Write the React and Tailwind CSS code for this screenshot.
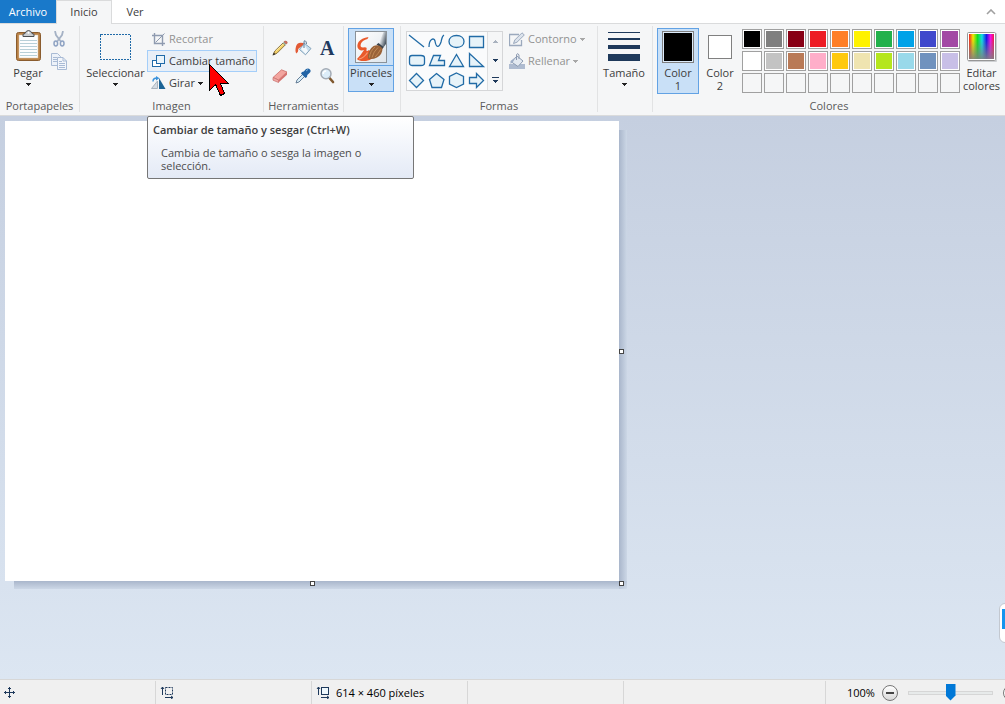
import { useState } from "react";

const palette = [
  { name: "Negro", fill: "bg-black" },
  { name: "Gris 50%", fill: "bg-[#7f7f7f]" },
  { name: "Rojo oscuro", fill: "bg-[#880015]" },
  { name: "Rojo", fill: "bg-[#ed1c24]" },
  { name: "Naranja", fill: "bg-[#ff7f27]" },
  { name: "Amarillo", fill: "bg-[#fff200]" },
  { name: "Verde", fill: "bg-[#22b14c]" },
  { name: "Turquesa", fill: "bg-[#00a2e8]" },
  { name: "Índigo", fill: "bg-[#3f48cc]" },
  { name: "Púrpura", fill: "bg-[#a349a4]" },
  { name: "Blanco", fill: "bg-white" },
  { name: "Gris 25%", fill: "bg-[#c3c3c3]" },
  { name: "Marrón", fill: "bg-[#b97a57]" },
  { name: "Rosa", fill: "bg-[#ffaec9]" },
  { name: "Oro", fill: "bg-[#ffc90e]" },
  { name: "Canela", fill: "bg-[#efe4b0]" },
  { name: "Lima", fill: "bg-[#b5e61d]" },
  { name: "Turquesa claro", fill: "bg-[#99d9ea]" },
  { name: "Gris azulado", fill: "bg-[#7092be]" },
  { name: "Lavanda", fill: "bg-[#c8bfe7]" },
];

const customSlots = [1, 2, 3, 4, 5, 6, 7, 8, 9, 10];

const shapes = [
  { name: "Línea", d: "M1 2L16 14" },
  { name: "Curva", d: "M1 14C1 6 6 4 7 8C8 15 11 15 13 9C14 5 14 3 16 2" },
  { name: "Óvalo", d: "M8.5 2.5C13 2.5 16 5 16 8.5S13 14.5 8.5 14.5S1 12 1 8.5S4 2.5 8.5 2.5Z" },
  { name: "Rectángulo", d: "M1.5 3.5H15.5V14.5H1.5Z" },
  { name: "Rectángulo redondeado", d: "M4 3.5H13Q16.5 3.5 16.5 6V11Q16.5 13.5 13 13.5H4Q1.5 13.5 1.5 11V6Q1.5 3.5 4 3.5Z" },
  { name: "Polígono", d: "M5.5 3.5H12.5L10.5 8.5H16.5V13.5H1.5Z" },
  { name: "Triángulo", d: "M8.5 2.5L15.5 14.5H1.5Z" },
  { name: "Triángulo rectángulo", d: "M1.5 1.5V14.5H15.5Z" },
  { name: "Rombo", d: "M8.5 1.5L15.5 8.5L8.5 15.5L1.5 8.5Z" },
  { name: "Pentágono", d: "M8.5 1.5L16 7.5L13.5 15.5H4L1.5 7.5Z" },
  { name: "Hexágono", d: "M8.5 1L15.5 4.5V12L8.5 15.5L1.5 12V4.5Z" },
  { name: "Flecha derecha", d: "M1.5 5.5H8.5V1.5L15.5 8.5L8.5 15.5V11.5H1.5Z" },
];

function Caret({ color = "text-[#222222]" }) {
  return (
    <svg className={color} width="5" height="3" viewBox="0 0 5 3" fill="currentColor" shapeRendering="crispEdges">
      <path d="M0 0H5V1H4V2H3V3H2V2H1V1H0Z" />
    </svg>
  );
}

function PasteIcon() {
  return (
    <svg width="26" height="32" viewBox="0 0 26 32">
      <rect x="1.5" y="2.5" width="24" height="28" rx="2" fill="#b98145" stroke="#8a5c2e" />
      <rect x="4" y="5" width="19" height="23" fill="#fcfdfe" stroke="#d9c7af" strokeWidth="0.5" />
      <path d="M5 10.5H22M5 13.5H22M5 16.5H22M5 19.5H22M5 22.5H22M5 25.5H22" stroke="#b7cfd8" />
      <path d="M8 6.5Q7 3.5 10 3.5Q11 0.5 13.5 0.5T17 3.5Q20 3.5 19 6.5Z" fill="#c9cccf" stroke="#4c4f52" />
      <circle cx="13.5" cy="2.8" r="1" fill="#fff" />
    </svg>
  );
}

function CutIcon() {
  return (
    <svg width="12" height="16" viewBox="0 0 12 16" fill="none">
      <path d="M2 0L3 4L7.5 10M10 0L9 4L4.5 10" stroke="#a5b2c5" strokeWidth="1.8" />
      <ellipse cx="2.8" cy="12.5" rx="1.8" ry="2.4" stroke="#8fa3c3" strokeWidth="1.5" />
      <ellipse cx="9.2" cy="12.5" rx="1.8" ry="2.4" stroke="#8fa3c3" strokeWidth="1.5" />
    </svg>
  );
}

function CopyIcon() {
  return (
    <svg width="16" height="17" viewBox="0 0 16 17" stroke="#a9bbd5">
      <path d="M0.5 0.5H6.5L9.5 3.5V12.5H0.5Z" fill="#edf2f9" />
      <path d="M2 4.5H6M2 6.5H6M2 8.5H6" />
      <path d="M6.5 4.5H12L15.5 8V16.5H6.5Z" fill="#f3f6fb" />
      <path d="M12 4.5V8H15.5" fill="none" />
      <path d="M8 8.5H11M8 10.5H14M8 12.5H14M8 14.5H14" />
    </svg>
  );
}

function CropIcon() {
  return (
    <svg width="13" height="13" viewBox="0 0 13 13" fill="none" stroke="#8f9bb0">
      <path d="M2.5 0V10.5H13M0 2.5H10.5V13" strokeWidth="1.4" />
      <path d="M3.5 9.5L12.5 0.5" />
    </svg>
  );
}

function ResizeIcon() {
  return (
    <svg width="13" height="13" viewBox="0 0 13 13" stroke="#1f6aa8">
      <rect x="0.5" y="5.5" width="8" height="6" fill="#fff" />
      <rect x="4.5" y="0.5" width="8" height="8" fill="#e9f4fb" />
    </svg>
  );
}

function RotateIcon() {
  return (
    <svg width="15" height="14" viewBox="0 0 15 14">
      <path d="M6.5 5V12.5H0.5Z" fill="#d4dbe2" stroke="#a9b3bd" />
      <path d="M8 2V13H14.5Z" fill="#1c6496" />
      <path d="M2 5.5Q2 2 6 2" fill="none" stroke="#3b93dc" strokeWidth="1.4" />
      <path d="M5 0L8.5 2.2L5 4.5Z" fill="#3b93dc" />
    </svg>
  );
}

function PencilIcon() {
  return (
    <svg width="16" height="16" viewBox="0 0 16 16">
      <path d="M1.2 14.8L2.8 11L11 3L13.2 5L5 13.2Z" fill="#f3d067" stroke="#826a39" strokeWidth="0.9" />
      <path d="M3.8 11L11.5 3.8" stroke="#fff2ae" strokeWidth="0.8" />
      <path d="M10.8 3L12 1.8L14.2 4L13 5.2Z" fill="#9bb3a0" />
      <path d="M12 1.8L13 1Q15.6 1 15.2 3.2L14.2 4Z" fill="#d97668" stroke="#a3503e" strokeWidth="0.6" />
      <path d="M0.5 15.5L1.8 12.4L3.6 14.2Z" fill="#39342c" />
    </svg>
  );
}

function FillIcon() {
  return (
    <svg width="17" height="16" viewBox="0 0 17 16">
      <path d="M9 3L16 8.5L10.5 14.8L4.5 9.5Z" fill="#c9dfee" stroke="#7b9cb5" strokeWidth="0.9" />
      <path d="M6 9L9.5 5L13 11L10.5 14Z" fill="#fff" opacity="0.8" />
      <path d="M9 8V2Q9 0.3 10.2 0.8T11.5 4" fill="none" stroke="#5f7d98" />
      <path d="M8.5 3Q2 1.5 1 6.5Q-0.2 11 1.2 13.5Q3.6 12.5 3.2 9L8 5Z" fill="#e25a35" />
    </svg>
  );
}

function EraserIcon() {
  return (
    <svg width="16" height="14" viewBox="0 0 16 14">
      <path d="M1 8.5L9.5 0.8L15 3L6.5 11Z" fill="#f3a59f" stroke="#c96f6b" strokeWidth="0.8" />
      <path d="M1 8.5L6.5 11V13.5L1 11.2Z" fill="#f0aaa6" stroke="#c96f6b" strokeWidth="0.7" />
      <path d="M6.5 11L15 3V5.8L6.5 13.5Z" fill="#d5716e" />
    </svg>
  );
}

function PickerIcon() {
  return (
    <svg width="16" height="16" viewBox="0 0 16 16">
      <path d="M1 15L2 12L8.5 5.5L10.5 7.5L4 14Z" fill="#d9eef8" stroke="#58728c" strokeWidth="0.9" />
      <path d="M7 4L8.8 3.5L11 1Q13.5 -0.2 15 1.5T14.5 5L12.3 7L12 9L10.5 10L6 5.5Z" fill="#2364a5" />
      <path d="M11 3L13 1.5" stroke="#84b4dc" />
    </svg>
  );
}

function MagnifierIcon() {
  return (
    <svg width="15" height="16" viewBox="0 0 15 16">
      <path d="M9.5 10L13 14" stroke="#80592f" strokeWidth="2.6" strokeLinecap="round" />
      <circle cx="6" cy="5.8" r="5" fill="#dcedf9" stroke="#a3abb5" strokeWidth="1.5" />
      <path d="M3.2 6Q3.2 3 6.2 3" fill="none" stroke="#fff" strokeWidth="1.4" />
    </svg>
  );
}

function BrushIcon() {
  return (
    <svg width="32" height="32" viewBox="0 0 32 32">
      <defs>
        <linearGradient id="brushPaper" x1="0" y1="0" x2="1" y2="1">
          <stop offset="0" stopColor="#ffffff" />
          <stop offset="1" stopColor="#dfe5eb" />
        </linearGradient>
        <linearGradient id="brushHandle" x1="0" y1="0" x2="1" y2="0.6">
          <stop offset="0" stopColor="#8a949e" />
          <stop offset="0.4" stopColor="#eef2f6" />
          <stop offset="1" stopColor="#4b5763" />
        </linearGradient>
      </defs>
      <rect x="0.5" y="0.5" width="31" height="31" fill="url(#brushPaper)" stroke="#8a9299" />
      <path d="M13.5 6Q6.5 7 3.5 11Q0.8 16 4 18.5Q6 20 9 19Q6 24 2 28Q4 30.5 11 30Q16 29 19 26L14 19Q11 21.5 11.5 18.5Q12.5 15.5 8 16.5Q4.5 16.5 6 12.5Q7.5 9 12.5 8Z" fill="#e9592b" />
      <path d="M4 28Q9 27 12.5 21.5" fill="none" stroke="#f59a72" strokeWidth="1.2" />
      <path d="M23 13L28.5 1H31V13L28 17Z" fill="url(#brushHandle)" />
      <path d="M21.5 13.5L23.5 12L28.5 16L27.5 18Z" fill="#39434d" />
      <path d="M13 27.5Q12.5 19 18.5 15Q24 12.5 27.5 17.5Q27.5 23.5 22 26.5Q17 29 13 27.5Z" fill="#9a6238" />
      <path d="M14.5 26.5Q15 20 20 16M17 26.5Q18.5 20.5 23 16.5M20 26Q23.5 22.5 25.5 18.5" stroke="#c58d59" fill="none" strokeWidth="0.9" />
    </svg>
  );
}

function OutlineIcon() {
  return (
    <svg width="16" height="15" viewBox="0 0 16 15" fill="none" stroke="#9ba9bd">
      <path d="M10 2.5H0.5V13.5H12.5V8" strokeWidth="1.3" />
      <path d="M4.5 11.5L5.8 8L13 0.8L15.3 3L8 10.2Z" fill="#dce3ec" />
    </svg>
  );
}

function ShapeFillIcon() {
  return (
    <svg width="16" height="16" viewBox="0 0 16 16">
      <path d="M0 11H16V16H0Z" fill="#aebbd0" />
      <path d="M8 3L14 8L9 13.5L2.5 9Z" fill="#e3e9f1" stroke="#8c9bb2" />
      <path d="M7.5 7V1.5Q9 -0.5 10 2V6" fill="none" stroke="#8c9bb2" />
      <path d="M6 4.5L1.5 8V11L4 9Z" fill="#9eaec7" />
    </svg>
  );
}

function SpectrumIcon() {
  return (
    <svg width="30" height="30" viewBox="0 0 30 30">
      <defs>
        <linearGradient id="hues">
          <stop offset="0" stopColor="#f02020" />
          <stop offset="0.16" stopColor="#f5e800" />
          <stop offset="0.34" stopColor="#10df20" />
          <stop offset="0.52" stopColor="#10dce8" />
          <stop offset="0.7" stopColor="#1818e8" />
          <stop offset="0.86" stopColor="#f010e8" />
          <stop offset="1" stopColor="#f01848" />
        </linearGradient>
        <linearGradient id="fade" x1="0" y1="0" x2="0" y2="1">
          <stop offset="0.2" stopColor="#808080" stopOpacity="0" />
          <stop offset="1" stopColor="#808080" stopOpacity="0.9" />
        </linearGradient>
      </defs>
      <rect x="1" y="1" width="29" height="29" rx="1" fill="#cdcfd2" />
      <rect x="0.5" y="0.5" width="28" height="28" rx="1" fill="#fff" stroke="#969696" />
      <rect x="2" y="2" width="25" height="25" fill="url(#hues)" />
      <rect x="2" y="2" width="25" height="25" fill="url(#fade)" />
    </svg>
  );
}

function Group({ label, className, children }) {
  return (
    <section className={`flex h-[86px] shrink-0 flex-col border-r border-[#e2e3e4] ${className}`}>
      <div className="flex flex-1 items-start">{children}</div>
      {label && <h2 className="h-3 text-center leading-3 text-[#5a5a5a]">{label}</h2>}
    </section>
  );
}

function StatusCell({ children }) {
  return <div className="flex w-[156px] shrink-0 items-center gap-1 border-r border-[#d7d7d7] pl-1">{children}</div>;
}

export default function App() {
  const [zoom, setZoom] = useState(50);

  return (
    <div className="flex min-h-screen flex-col overflow-hidden bg-white font-['Open_Sans','Noto_Sans',sans-serif] text-[11px] leading-3 text-[#3c3c3c]">
      <nav className="flex h-6 shrink-0 items-stretch border-b border-[#dadbdc]">
        <button className="w-14 bg-[#1979ca] text-white">Archivo</button>
        <button className="-mb-px w-14 border-x border-t border-[#dadbdc] bg-[#f5f6f7] pb-[2px]">Inicio</button>
        <button className="w-[46px]">Ver</button>
        <button aria-label="Minimizar la cinta de opciones" className="ml-auto px-[9px]">
          <svg width="10" height="6" viewBox="0 0 10 6" fill="none" stroke="#a0a0a0" strokeWidth="1.6">
            <path d="M1 5L5 1L9 5" />
          </svg>
        </button>
      </nav>

      <div className="relative z-10 flex shrink-0 border-b border-[#dadbdc] bg-[#f5f6f7] pt-[2px] pb-[3px]">
        <Group label="Portapapeles" className="w-20">
          <button className="flex w-12 flex-col items-center pt-1 pl-2">
            <PasteIcon />
            <span className="mt-[5px]">Pegar</span>
            <span className="mt-1 h-[3px]"><Caret /></span>
          </button>
          <div className="flex flex-col items-center gap-[6px] pt-[5px] pl-[3px]">
            <button aria-label="Cortar" disabled><CutIcon /></button>
            <button aria-label="Copiar" disabled><CopyIcon /></button>
          </div>
        </Group>

        <Group label="Imagen" className="relative w-[184px]">
          <button className="flex w-[67px] flex-col items-center pt-2 pl-1">
            <svg width="31" height="26" viewBox="0 0 31 26" fill="none" stroke="#1f6aa8" shapeRendering="crispEdges">
              <rect x="0.5" y="0.5" width="30" height="25" strokeDasharray="2 1" />
            </svg>
            <span className="mt-[7px]">Seleccionar</span>
            <span className="mt-1 h-[3px]"><Caret /></span>
          </button>
          <div className="flex flex-col pt-[2px]">
            <button disabled className="flex h-[22px] items-center gap-1 pl-[5px] text-[#929292]">
              <CropIcon />
              Recortar
            </button>
            <button
              aria-describedby="resize-tip"
              className="flex h-[22px] w-[110px] items-center gap-1 border border-[#a4cef9] bg-[#e8eff7] pl-1 whitespace-nowrap"
            >
              <ResizeIcon />
              Cambiar tamaño
            </button>
            <button className="flex h-[22px] items-center gap-[3px] pl-1">
              <RotateIcon />
              Girar
              <Caret />
            </button>
          </div>

          <div
            id="resize-tip"
            role="tooltip"
            className="absolute top-[90px] left-[67px] h-[63px] w-[267px] rounded-[2px] border border-[#767676] bg-linear-to-b from-white to-[#e4eaf6] px-[5px] pt-[7px] text-[#4c4c4c]"
          >
            <p className="font-semibold whitespace-nowrap text-[#3c3c3c]">Cambiar de tamaño y sesgar (Ctrl+W)</p>
            <p className="mt-[10px] w-[220px] pl-2 leading-[13px]">Cambia de tamaño o sesga la imagen o selección.</p>
          </div>

          <svg
            className="absolute top-[37px] left-[128px]"
            width="23"
            height="34"
            viewBox="0 0 23 34"
            fill="#ff0000"
            stroke="#000000"
            shapeRendering="crispEdges"
          >
            <path d="M1.5 1.5V27.5L7.5 21.5L12.5 32.5L16.5 30.5L12.5 20.5H20.5Z" />
          </svg>
        </Group>

        <Group label="Herramientas" className="w-20">
          <div className="grid w-full grid-cols-3 px-1 pt-2">
            <button aria-label="Lápiz" className="flex h-7 items-center justify-center"><PencilIcon /></button>
            <button aria-label="Relleno con color" className="flex h-7 items-center justify-center"><FillIcon /></button>
            <button aria-label="Texto" className="flex h-7 items-center justify-center font-['Liberation_Serif',serif] text-xl font-bold text-[#1f3a5f]">
              A
            </button>
            <button aria-label="Borrador" className="flex h-7 items-center justify-center"><EraserIcon /></button>
            <button aria-label="Selector de color" className="flex h-7 items-center justify-center"><PickerIcon /></button>
            <button aria-label="Lupa" className="flex h-7 items-center justify-center"><MagnifierIcon /></button>
          </div>
        </Group>

        <Group className="w-[57px] pt-[2px] pl-1">
          <button className="flex h-16 w-[46px] flex-col items-center border border-[#62a2e4] bg-[#c9e0f7] pt-[2px]">
            <BrushIcon />
            <span className="mt-[2px] w-full border-t border-[#62a2e4] pt-px">Pinceles</span>
            <span className="mt-1 h-[3px]"><Caret /></span>
          </button>
        </Group>

        <Group label="Formas" className="w-[197px]">
          <div className="mt-[5px] ml-[5px] flex h-[60px] w-[97px] border border-[#d5d6d8] bg-[#fafbfc]">
            <div className="grid flex-1 grid-cols-4 border-r border-[#dedfe0]">
              {shapes.map((shape) => (
                <button key={shape.name} aria-label={shape.name} className="flex items-center justify-center">
                  <svg width="18" height="17" viewBox="0 0 18 17" fill={shape.name === "Línea" || shape.name === "Curva" ? "none" : "#e7f3f9"} stroke="#216ba6" strokeWidth="1.3">
                    <path d={shape.d} />
                  </svg>
                </button>
              ))}
            </div>
            <div className="flex w-[14px] flex-col bg-[#f5f6f7]">
              <button aria-label="Subir" className="flex flex-1 items-center justify-center">
                <span className="rotate-180"><Caret color="text-[#a9b2bf]" /></span>
              </button>
              <button aria-label="Bajar" className="flex flex-1 items-center justify-center"><Caret color="text-[#1e395b]" /></button>
              <button aria-label="Más formas" className="flex flex-1 items-center justify-center">
                <svg width="7" height="6" viewBox="0 0 7 6" fill="#1e395b" shapeRendering="crispEdges">
                  <path d="M0 0H7V1H0ZM1 3H6V4H5V5H4V6H3V5H2V4H1Z" />
                </svg>
              </button>
            </div>
          </div>
          <div className="flex flex-col pt-[2px] pl-[6px] text-[#929292]">
            <button disabled className="flex h-[22px] items-center gap-[3px]">
              <OutlineIcon />
              Contorno
              <Caret color="text-[#a8a8a8]" />
            </button>
            <button disabled className="flex h-[22px] items-center gap-[3px]">
              <ShapeFillIcon />
              Rellenar
              <Caret color="text-[#a8a8a8]" />
            </button>
          </div>
        </Group>

        <Group className="w-[55px]">
          <button className="flex w-full flex-col items-center pt-[6px] pr-[2px]">
            <span className="flex w-8 flex-col gap-[5px]">
              <span className="h-px bg-[#1e395b]" />
              <span className="h-[2px] bg-[#1e395b]" />
              <span className="h-1 bg-[#1e395b]" />
              <span className="h-[7px] bg-[#1e395b]" />
            </span>
            <span className="mt-[6px]">Tamaño</span>
            <span className="mt-1 h-[3px]"><Caret /></span>
          </button>
        </Group>

        <section className="flex h-[86px] flex-1 flex-col">
          <div className="flex flex-1 items-start pt-[2px] pl-1">
            <button className="flex h-[66px] w-[42px] flex-col items-center border border-[#62a2e4] bg-[#c9e0f7] pt-[2px]">
              <span className="size-8 border border-[#808080] bg-[#dcebfa] p-px">
                <span className="block size-7 bg-black" />
              </span>
              <span className="mt-[3px] w-8 leading-[13px]">Color 1</span>
            </button>
            <button className="flex h-[66px] w-[42px] flex-col items-center pt-[7px]">
              <span className="size-6 border border-[#808080] bg-white" />
              <span className="mt-[7px] w-8 leading-[13px]">Color 2</span>
            </button>
            <div className="mt-px ml-px grid grid-cols-10 gap-[2px]">
              {palette.map((color) => (
                <button key={color.name} aria-label={color.name} className="size-5 border border-[#a0a0a0] bg-white p-px">
                  <span className={`block size-4 ${color.fill}`} />
                </button>
              ))}
              {customSlots.map((slot) => (
                <button key={slot} aria-label={`Color personalizado ${slot}`} className="size-5 border border-[#a0a0a0]" />
              ))}
            </div>
            <button className="flex w-[43px] flex-col items-center pt-1">
              <SpectrumIcon />
              <span className="mt-1 leading-[13px]">Editar colores</span>
            </button>
          </div>
          <h2 className="h-3 text-center leading-3 text-[#5a5a5a]">Colores</h2>
        </section>
      </div>

      <main className="relative flex-1 overflow-hidden bg-linear-to-b from-[#c5cfe0] to-[#dce6f2] pt-[5px] pb-12 pl-[5px]">
        <div className="relative h-[460px] w-[614px] bg-white">
          <div className="absolute top-[9px] -right-2 bottom-0 w-2 bg-linear-to-r from-[#a9b6cb] to-[#ccd7e6]" />
          <div className="absolute right-0 -bottom-2 left-[9px] h-2 bg-linear-to-b from-[#a9b6cb] to-[#ccd7e6]" />
          <div className="absolute -right-2 -bottom-2 size-2 bg-linear-to-br from-[#a9b6cb] to-[#d3deeb]" />
          <span className="absolute top-[228px] -right-[5px] size-[5px] border border-[#454545] bg-white" />
          <span className="absolute -bottom-[5px] left-[305px] size-[5px] border border-[#454545] bg-white" />
          <span className="absolute -right-[5px] -bottom-[5px] size-[5px] border border-[#454545] bg-white" />
        </div>
        <div className="absolute -right-5 bottom-9 flex h-10 w-[26px] items-center rounded-md border border-[#c3c8d0] bg-white pb-2 pl-[2px]">
          <span className="h-5 w-5 bg-[#1595ee]" />
        </div>
      </main>

      <footer className="flex h-[25px] shrink-0 border-t border-[#d7d7d7] bg-[#f0f0f0] pt-px text-black">
        <StatusCell>
          <svg width="11" height="11" viewBox="0 0 11 11" fill="none" stroke="#1e395b">
            <path d="M5.5 0V11M0 5.5H11M4 2L5.5 0.5L7 2M4 9L5.5 10.5L7 9M2 4L0.5 5.5L2 7M9 4L10.5 5.5L9 7" />
          </svg>
        </StatusCell>
        <StatusCell>
          <svg width="14" height="13" viewBox="0 0 14 13" fill="none" stroke="#1e395b">
            <path d="M2.5 1V9M1 3L2.5 1L4 3M5 11.5H13M11 10L13 11.5L11 13" />
            <rect x="5.5" y="1.5" width="7" height="7" strokeDasharray="2 1" />
          </svg>
        </StatusCell>
        <StatusCell>
          <svg width="14" height="13" viewBox="0 0 14 13" fill="none" stroke="#1e395b">
            <path d="M2.5 1V9M1 3L2.5 1L4 3M5 11.5H13M11 10L13 11.5L11 13" />
            <rect x="5.5" y="1.5" width="7" height="7" fill="#eef7fc" />
          </svg>
          <span className="pl-[2px]">614 × 460 píxeles</span>
        </StatusCell>
        <StatusCell />
        <div className="ml-auto flex w-[180px] items-center overflow-hidden border-l border-[#d7d7d7] pl-[21px]">
          <label htmlFor="zoom" className="w-[35px] shrink-0">100%</label>
          <button aria-label="Alejar" className="mr-[10px] flex size-4 shrink-0 items-center justify-center rounded-full border border-[#777777] bg-linear-to-b from-white to-[#d8d8d8]">
            <span className="h-[2px] w-2 bg-[#444444]" />
          </button>
          <input
            id="zoom"
            type="range"
            value={zoom}
            onChange={(e) => setZoom(Number(e.target.value))}
            className="h-[18px] w-[85px] shrink-0 appearance-none bg-transparent [&::-webkit-slider-runnable-track]:h-1 [&::-webkit-slider-runnable-track]:border [&::-webkit-slider-runnable-track]:border-[#d6d6d6] [&::-webkit-slider-runnable-track]:bg-[#e7eaea] [&::-webkit-slider-thumb]:-mt-[8px] [&::-webkit-slider-thumb]:h-[17px] [&::-webkit-slider-thumb]:w-[10px] [&::-webkit-slider-thumb]:appearance-none [&::-webkit-slider-thumb]:bg-[#0078d7] [&::-webkit-slider-thumb]:[clip-path:polygon(0_0,100%_0,100%_70%,50%_100%,0_70%)]"
          />
          <button aria-label="Acercar" className="ml-[10px] flex size-4 shrink-0 items-center justify-center rounded-full border border-[#777777] bg-white">
            <span className="h-[2px] w-2 bg-[#444444]" />
          </button>
        </div>
      </footer>
    </div>
  );
}
